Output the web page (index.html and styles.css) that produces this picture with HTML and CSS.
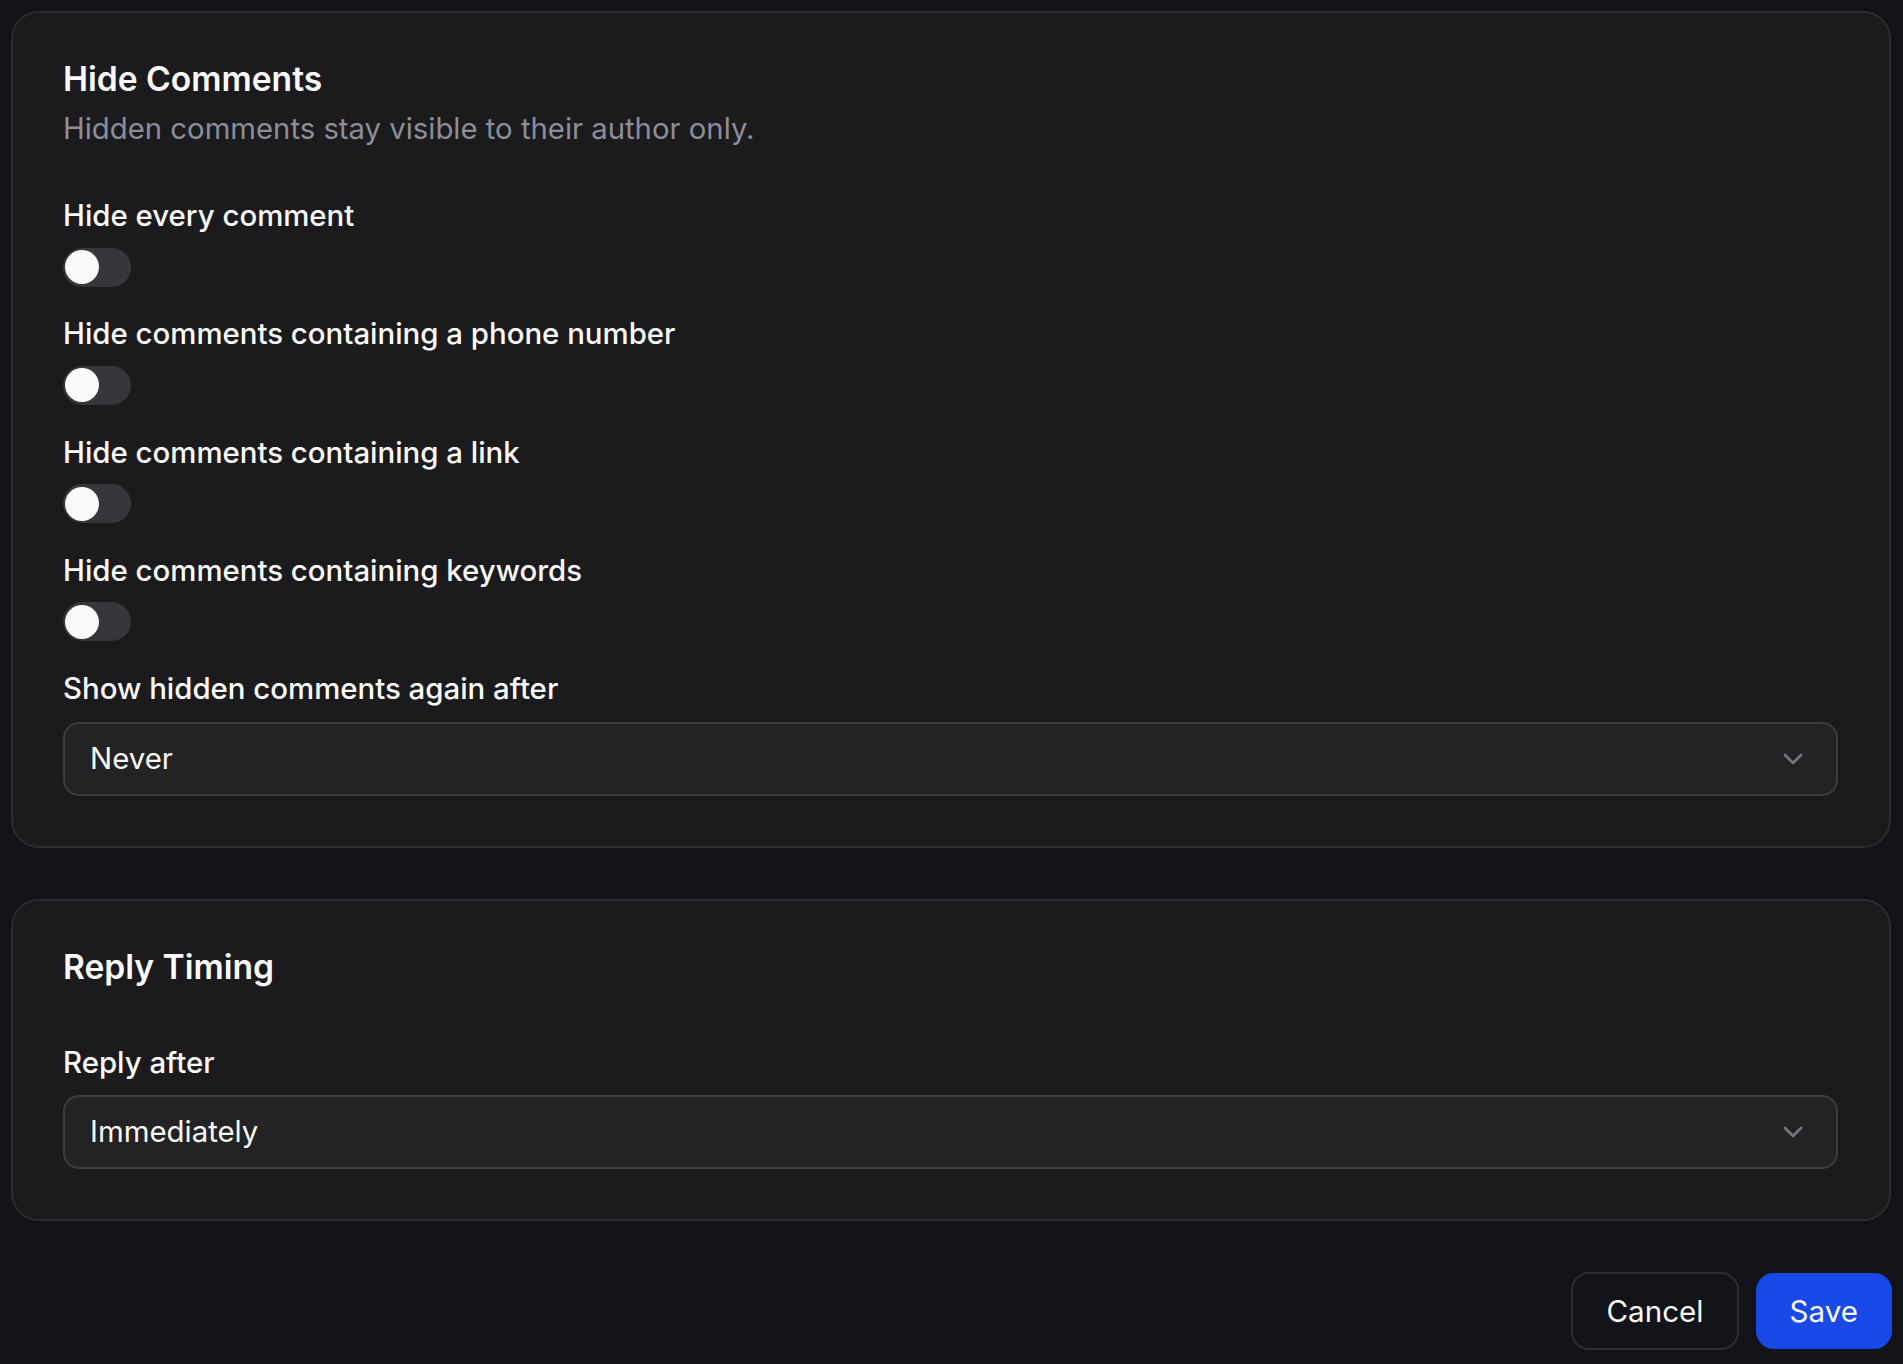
FILE: index.html
```html
<!DOCTYPE html>
<html lang="en">
<head>
<meta charset="utf-8">
<title>Comment settings</title>
<link rel="stylesheet" href="styles.css">
</head>
<body>
<main class="page">
  <section class="card">
    <header class="card-head">
      <h2 class="card-title">Hide Comments</h2>
      <p class="card-desc">Hidden comments stay visible to their author only.</p>
    </header>
    <div class="fields">
      <div class="field">
        <label class="field-label">Hide every comment</label>
        <button class="switch" type="button" aria-pressed="false"><span class="knob"></span></button>
      </div>
      <div class="field">
        <label class="field-label">Hide comments containing a phone number</label>
        <button class="switch" type="button" aria-pressed="false"><span class="knob"></span></button>
      </div>
      <div class="field">
        <label class="field-label">Hide comments containing a link</label>
        <button class="switch" type="button" aria-pressed="false"><span class="knob"></span></button>
      </div>
      <div class="field">
        <label class="field-label">Hide comments containing keywords</label>
        <button class="switch" type="button" aria-pressed="false"><span class="knob"></span></button>
      </div>
      <div class="field">
        <label class="field-label field-label--select">Show hidden comments again after</label>
        <div class="select">
          <span class="select-value">Never</span>
          <svg class="chevron" viewBox="0 0 24 24" fill="none" stroke="currentColor" stroke-width="2" stroke-linecap="round" stroke-linejoin="round"><path d="m6 9 6 6 6-6"/></svg>
        </div>
      </div>
    </div>
  </section>

  <section class="card">
    <header class="card-head card-head--solo">
      <h2 class="card-title">Reply Timing</h2>
    </header>
    <div class="fields">
      <div class="field">
        <label class="field-label field-label--select">Reply after</label>
        <div class="select">
          <span class="select-value">Immediately</span>
          <svg class="chevron" viewBox="0 0 24 24" fill="none" stroke="currentColor" stroke-width="2" stroke-linecap="round" stroke-linejoin="round"><path d="m6 9 6 6 6-6"/></svg>
        </div>
      </div>
    </div>
  </section>

  <div class="actions">
    <button class="btn btn-outline" type="button">Cancel</button>
    <button class="btn btn-primary" type="button">Save</button>
  </div>
</main>
</body>
</html>
```

FILE: styles.css
```css
* { box-sizing: border-box; }

html, body {
  margin: 0;
  padding: 0;
  background: #131419;
}

body {
  font-family: Inter, "Noto Sans", "Liberation Sans", sans-serif;
  color: #fafafa;
}

.page {
  display: flex;
  flex-direction: column;
  gap: 51px;
  padding: 11px 12px 11px 11px;
}

.card {
  background: #1b1b1e;
  border: 2px solid #2c2c31;
  border-radius: 28px;
  padding: 45px 51px 50px 50px;
}

.card-head {
  display: flex;
  flex-direction: column;
  gap: 10px;
  margin-bottom: 48px;
}

.card-head--solo {
  margin-bottom: 57px;
}

.card-title {
  margin: 0;
  font-size: 33.6px;
  line-height: 41px;
  font-weight: 600;
  color: #fafafa;
}

.card-desc {
  margin: 0;
  font-size: 29.3px;
  line-height: 40px;
  font-weight: 400;
  color: #8c8e99;
}

.fields {
  display: flex;
  flex-direction: column;
  gap: 28.8px;
}

.field {
  display: flex;
  flex-direction: column;
  align-items: flex-start;
}

.field-label {
  font-size: 29.4px;
  line-height: 38px;
  font-weight: 500;
  color: #fafafa;
  margin-bottom: 12.5px;
}

.field-label--select {
  margin-bottom: 13.5px;
}

.switch {
  width: 68px;
  height: 39px;
  padding: 0 2px;
  border: 0;
  border-radius: 20px;
  background: #37373b;
  display: flex;
  align-items: center;
}

.knob {
  width: 34px;
  height: 34px;
  border-radius: 50%;
  background: #fafafa;
}

.select {
  align-self: stretch;
  height: 74px;
  display: flex;
  align-items: center;
  justify-content: space-between;
  padding: 0 27px 0 25px;
  background: #232326;
  border: 2px solid #3c3c41;
  border-radius: 16px;
}

.select-value {
  font-size: 29.4px;
  line-height: 40px;
  color: #fafafa;
}

.chevron {
  width: 32px;
  height: 32px;
  color: #75757d;
}

.actions {
  display: flex;
  justify-content: flex-end;
  gap: 17px;
  margin-right: -1px;
}

.btn {
  font-family: Inter, "Noto Sans", "Liberation Sans", sans-serif;
  font-size: 29.6px;
  font-weight: 400;
  line-height: 40px;
  border-radius: 18px;
  color: #fafafa;
  cursor: pointer;
}

.btn-outline {
  height: 78px;
  padding: 0 33px;
  background: #131419;
  border: 2px solid #2c2c31;
}

.btn-primary {
  height: 76px;
  padding: 0 34px;
  background: #1849e6;
  border: 0;
  margin-top: 1px;
}
```
